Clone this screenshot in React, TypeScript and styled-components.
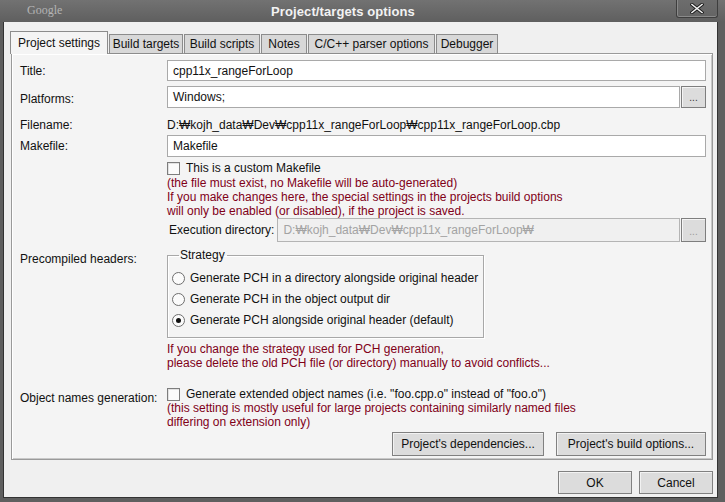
import React from "react";
import styled, { createGlobalStyle } from "styled-components";

const Global = createGlobalStyle`
  html, body { margin: 0; padding: 0; background: #5e5e5e; overflow: hidden; }
  * { box-sizing: border-box; }
`;

const Frame = styled.div`
  width: 725px;
  height: 502px;
  display: flex;
  flex-direction: column;
  background: linear-gradient(#727272, #5f5f5f 22px, #5f5f5f);
  padding: 0 7px 4px 3px;
  font-family: "Liberation Sans", Arial, sans-serif;
  font-size: 12px;
  color: #111;
`;

const TitleBar = styled.div`
  height: 22px;
  flex: none;
  display: flex;
  align-items: flex-start;
  margin-left: -3px;
`;

const Brand = styled.div`
  width: 70px;
  padding-left: 27px;
  padding-top: 3px;
  font-family: "Liberation Serif", "Times New Roman", serif;
  font-size: 12px;
  color: #b4b4b4;
`;

const TitleText = styled.div`
  flex: 1;
  text-align: center;
  padding-right: 60px;
  padding-top: 4px;
  font-weight: bold;
  font-size: 13px;
  color: #f2f2f2;
  letter-spacing: 0.1px;
`;

const CloseButton = styled.div`
  width: 42px;
  height: 18px;
  display: flex;
  align-items: center;
  justify-content: center;
  border: 1px solid #3e3e3e;
  border-top: none;
  border-radius: 0 0 3px 3px;
  box-shadow: inset 1px 0 0 #8a8a8a, inset 0 -1px 0 #8a8a8a;
  background: linear-gradient(#6d6d6d, #646464);
`;

const Client = styled.div`
  flex: 1;
  display: flex;
  flex-direction: column;
  background: #f0f0f0;
  border: 1px solid #333;
  border-top: none;
  padding: 9px 4px 3px 6px;
`;

const TabStrip = styled.div`
  display: flex;
  align-items: flex-end;
  height: 23px;
  position: relative;
  z-index: 2;
`;

const Tab = styled.div<{ $active?: boolean; $w: number }>`
  width: ${(p) => p.$w}px;
  height: ${(p) => (p.$active ? "23px" : "20px")};
  padding-top: ${(p) => (p.$active ? "4px" : "2px")};
  margin-left: ${(p) => (p.$active ? "0" : "1px")};
  text-align: center;
  background: ${(p) => (p.$active ? "#f4f4f4" : "#d8d8d8")};
  border: 1px solid #8c8c8c;
  border-bottom: ${(p) => (p.$active ? "none" : "1px solid #8c8c8c")};
  white-space: nowrap;
  color: #111;
  font-size: 12px;
`;

const Panel = styled.div`
  height: 407px;
  margin-left: 1px;
  margin-top: -1px;
  background: #f4f4f4;
  border: 1px solid #9a9a9a;
  box-shadow: inset 1px 1px 0 #ffffff, inset -1px -1px 0 #c8c8c8;
  padding: 6px 6px 0 8px;
  display: flex;
  flex-direction: column;
`;

const Row = styled.div<{ $mt?: number; $h?: number; $align?: string }>`
  display: grid;
  grid-template-columns: 147px 1fr;
  align-items: ${(p) => p.$align || "center"};
  margin-top: ${(p) => p.$mt || 0}px;
  min-height: ${(p) => p.$h || 0}px;
`;

const Label = styled.div<{ $dy?: number }>`
  white-space: nowrap;
  padding-top: ${(p) => p.$dy || 0}px;
`;

const Field = styled.div`
  display: flex;
  flex-direction: column;
  min-width: 0;
`;

const InputLine = styled.div`
  display: flex;
  align-items: stretch;
`;

const TextBox = styled.div<{ $h?: number; $disabled?: boolean }>`
  flex: 1;
  height: ${(p) => p.$h || 22}px;
  display: flex;
  align-items: center;
  padding-left: 5px;
  background: ${(p) => (p.$disabled ? "#f0f0f0" : "#ffffff")};
  border: 1px solid ${(p) => (p.$disabled ? "#b4b4b4" : "#a9a9a9")};
  color: ${(p) => (p.$disabled ? "#a3a3a3" : "#111")};
  white-space: nowrap;
  overflow: hidden;
`;

const DotsButton = styled.div<{ $disabled?: boolean }>`
  width: 25px;
  margin-left: 1px;
  display: flex;
  align-items: flex-end;
  justify-content: center;
  padding-bottom: 4px;
  background: #dcdcdc;
  border: 1px solid #7e7e7e;
  box-shadow: inset 1px 1px 0 #f4f4f4;
  color: ${(p) => (p.$disabled ? "#9a9a9a" : "#333")};
  font-size: 10px;
  line-height: 1;
`;

const PlainText = styled.div`
  white-space: nowrap;
`;

const CheckLine = styled.div`
  display: flex;
  align-items: center;
  gap: 6px;
  height: 14px;
  white-space: nowrap;
`;

const CheckBox = styled.span`
  width: 13px;
  height: 13px;
  flex: none;
  background: #fbfbfb;
  border: 1px solid #7d7d7d;
  box-shadow: inset 1px 1px 0 #e2e2e2;
`;

const Note = styled.div<{ $mt?: number }>`
  color: #800018;
  line-height: 14px;
  white-space: nowrap;
  margin-top: ${(p) => p.$mt || 0}px;
`;

const ExecLine = styled.div`
  display: flex;
  align-items: stretch;
  height: 24px;
`;

const ExecLabel = styled.div`
  align-self: center;
  padding: 0 3px 0 2px;
  white-space: nowrap;
`;

const GroupBox = styled.fieldset`
  width: 317px;
  height: 90px;
  margin: 0;
  padding: 8px 0 0 4px;
  border: 1px solid #a8a8a8;
  box-shadow: 1px 1px 0 #ffffff, inset 1px 1px 0 #ffffff;
  display: flex;
  flex-direction: column;
  gap: 5px;
`;

const Legend = styled.legend`
  padding: 0 2px 0 1px;
  margin-left: 7px;
  line-height: 14px;
`;

const RadioLine = styled.div`
  display: flex;
  align-items: center;
  gap: 5px;
  height: 16px;
  white-space: nowrap;
`;

const Radio = styled.span<{ $checked?: boolean }>`
  width: 13px;
  height: 13px;
  flex: none;
  border-radius: 50%;
  border: 1px solid #6e6e6e;
  background: #fbfbfb;
  display: flex;
  align-items: center;
  justify-content: center;
  &::after {
    content: "";
    width: 5px;
    height: 5px;
    border-radius: 50%;
    background: ${(p) => (p.$checked ? "#111" : "transparent")};
  }
`;

const ButtonRow = styled.div<{ $mt?: number }>`
  display: flex;
  justify-content: flex-end;
  gap: 12px;
  margin-top: ${(p) => p.$mt || 0}px;
`;

const PushButton = styled.div<{ $w: number; $h?: number }>`
  width: ${(p) => p.$w}px;
  height: ${(p) => p.$h || 24}px;
  display: flex;
  align-items: center;
  justify-content: center;
  background: #dcdcdc;
  border: 1px solid #808080;
  box-shadow: inset 1px 1px 0 #f2f2f2;
  white-space: nowrap;
  color: #111;
`;

const Footer = styled.div`
  margin-top: 11px;
  display: flex;
  justify-content: flex-end;
  gap: 7px;
`;

const CloseGlyph = () => (
  <svg width="14" height="11" viewBox="0 0 14 11">
    <path d="M2 1.5 L12 9.5 M12 1.5 L2 9.5" stroke="#1c1c1c" strokeWidth="3.4" strokeLinecap="square" />
    <path d="M2 1.5 L12 9.5 M12 1.5 L2 9.5" stroke="#f4f4f4" strokeWidth="1.6" strokeLinecap="square" />
  </svg>
);

const tabs = [
  { name: "Build targets", w: 74 },
  { name: "Build scripts", w: 76 },
  { name: "Notes", w: 46 },
  { name: "C/C++ parser options", w: 127 },
  { name: "Debugger", w: 62 },
];

export default function App() {
  return (
    <>
      <Global />
      <Frame>
        <TitleBar>
          <Brand>Google</Brand>
          <TitleText>Project/targets options</TitleText>
          <CloseButton>
            <CloseGlyph />
          </CloseButton>
        </TitleBar>
        <Client>
          <TabStrip>
            <Tab $active $w={98}>Project settings</Tab>
            {tabs.map((t) => (
              <Tab key={t.name} $w={t.w}>
                {t.name}
              </Tab>
            ))}
          </TabStrip>
          <Panel>
            <Row $h={21}>
              <Label>Title:</Label>
              <TextBox $h={21}>cpp11x_rangeForLoop</TextBox>
            </Row>
            <Row $mt={5} $h={22}>
              <Label $dy={3}>Platforms:</Label>
              <InputLine>
                <TextBox $h={22}>Windows;</TextBox>
                <DotsButton>...</DotsButton>
              </InputLine>
            </Row>
            <Row $mt={9} $h={16}>
              <Label>Filename:</Label>
              <PlainText>D:₩kojh_data₩Dev₩cpp11x_rangeForLoop₩cpp11x_rangeForLoop.cbp</PlainText>
            </Row>
            <Row $mt={2} $h={22}>
              <Label>Makefile:</Label>
              <TextBox $h={22}>Makefile</TextBox>
            </Row>
            <Row $mt={4} $align="start">
              <div />
              <Field>
                <CheckLine>
                  <CheckBox />
                  This is a custom Makefile
                </CheckLine>
                <Note $mt={1}>
                  (the file must exist, no Makefile will be auto-generated)
                  <br />
                  If you make changes here, the special settings in the projects build options
                  <br />
                  will only be enabled (or disabled), if the project is saved.
                </Note>
                <ExecLine>
                  <ExecLabel>Execution directory:</ExecLabel>
                  <TextBox $h={24} $disabled>D:₩kojh_data₩Dev₩cpp11x_rangeForLoop₩</TextBox>
                  <DotsButton $disabled>...</DotsButton>
                </ExecLine>
              </Field>
            </Row>
            <Row $mt={6} $align="start">
              <Label $dy={4}>Precompiled headers:</Label>
              <Field>
                <GroupBox>
                  <Legend>Strategy</Legend>
                  <RadioLine>
                    <Radio />
                    Generate PCH in a directory alongside original header
                  </RadioLine>
                  <RadioLine>
                    <Radio />
                    Generate PCH in the object output dir
                  </RadioLine>
                  <RadioLine>
                    <Radio $checked />
                    Generate PCH alongside original header (default)
                  </RadioLine>
                </GroupBox>
                <Note $mt={4}>
                  If you change the strategy used for PCH generation,
                  <br />
                  please delete the old PCH file (or directory) manually to avoid conflicts...
                </Note>
              </Field>
            </Row>
            <Row $mt={17} $align="start">
              <Label $dy={4}>Object names generation:</Label>
              <Field>
                <CheckLine>
                  <CheckBox />
                  Generate extended object names (i.e. "foo.cpp.o" instead of "foo.o")
                </CheckLine>
                <Note>
                  (this setting is mostly useful for large projects containing similarly named files
                  <br />
                  differing on extension only)
                </Note>
              </Field>
            </Row>
            <ButtonRow $mt={3}>
              <PushButton $w={152}>Project's dependencies...</PushButton>
              <PushButton $w={150}>Project's build options...</PushButton>
            </ButtonRow>
          </Panel>
          <Footer>
            <PushButton $w={74} $h={23}>OK</PushButton>
            <PushButton $w={74} $h={23}>Cancel</PushButton>
          </Footer>
        </Client>
      </Frame>
    </>
  );
}
